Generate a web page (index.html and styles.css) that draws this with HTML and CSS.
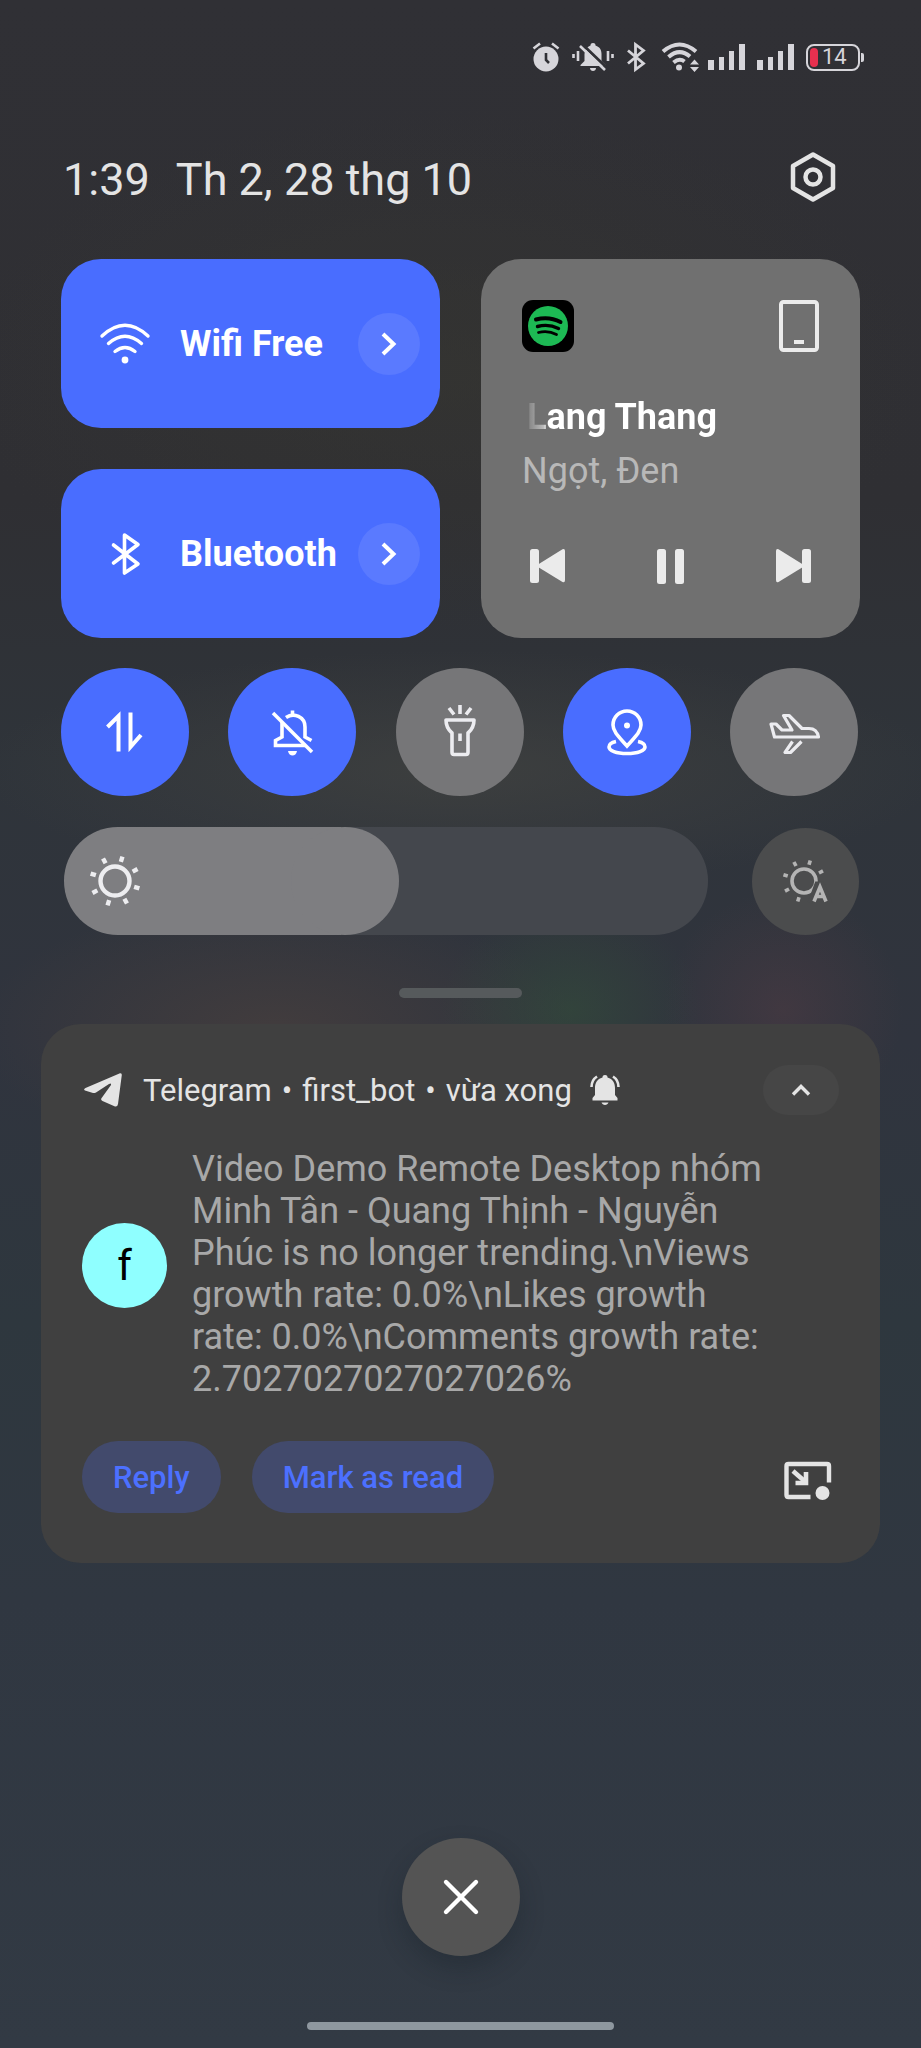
FILE: index.html
```html
<!DOCTYPE html>
<html lang="vi">
<head>
<meta charset="utf-8">
<meta name="viewport" content="width=device-width, initial-scale=1">
<title>Quick settings</title>
<link rel="stylesheet" href="styles.css">
</head>
<body>
<div class="shade">
  <div class="status">
    <svg class="s-alarm" width="28" height="30" viewBox="0 0 28 30"><circle cx="14" cy="17" r="12.500" fill="currentColor"/><path d="M1.500 6.500L8 1.500M26.500 6.500L20 1.500" stroke="currentColor" stroke-width="2.600"/><path d="M14 11v7l3 3" fill="none" stroke="#303035" stroke-width="2.600"/></svg>
    <svg class="s-mute" width="42" height="30" viewBox="0 0 42 30"><path d="M1.500 12v4M6 9v10M40.500 12v4M36 9v10" stroke="currentColor" stroke-width="2.600"/><path d="M21 1c2 0 2.500 1 2.500 2.500C28 5 29.500 8 29.500 12v7l4 4v1h-25v-1l4-4v-7c0-4 2-7 6-8.500C18.500 2 19 1 21 1z" fill="currentColor"/><path d="M18 26h6c0 4-6 4-6 0z" fill="currentColor"/><path d="M10 2L36 27" stroke="#303035" stroke-width="3"/><path d="M8 4L33 28" stroke="currentColor" stroke-width="2.600"/></svg>
    <svg class="s-bt" width="20" height="30" viewBox="0 0 20 30"><path d="M2 8.500L17.500 21.500 9.500 27.500V2.500L17.500 8.500 2 21.500" fill="none" stroke="currentColor" stroke-width="2.800"/></svg>
    <svg class="s-wifi" width="40" height="30" viewBox="0 0 40 30"><g fill="none" stroke="currentColor" stroke-width="4"><path d="M2 9.500Q18.500-4.500 35 9.500"/><path d="M7.500 15Q18.500 5.500 29 14.500"/><path d="M12.500 20.500Q18.500 15.500 23.500 19.500"/></g><circle cx="18" cy="25.500" r="3" fill="currentColor"/><path d="M29 22.500l4.500-5 4.500 5zM29 25l4.500 5 4.500-5z" fill="currentColor"/></svg>
    <svg class="s-sig" width="38" height="26" viewBox="0 0 38 26"><path d="M0 16h6v10H0zM11 13h5v13h-5zM21 7h5v19h-5zM31 0h6v26h-6z" fill="currentColor"/></svg>
    <svg class="s-sig" width="38" height="26" viewBox="0 0 38 26"><path d="M0 16h6v10H0zM11 13h5v13h-5zM21 7h5v19h-5zM31 0h6v26h-6z" fill="currentColor"/></svg>
    <span class="battery"><span class="battery-level"></span>14</span>
  </div>

  <header class="top">
    <span class="clock">1:39</span>
    <span class="date">Th 2, 28 thg 10</span>
    <button class="plain settings" aria-label="Settings"><svg width="46" height="50" viewBox="0 0 46 50" fill="none" stroke="currentColor" stroke-width="4.500" stroke-linejoin="round"><path d="M23 2.500L43 14v22L23 47.500 3 36V14z"/><circle cx="23" cy="25" r="7.500"/></svg></button>
  </header>

  <section class="tiles">
    <div class="tile wifi">
      <button class="plain tile-main"><svg width="50" height="42" viewBox="0 0 50 42" fill="none" stroke="currentColor" stroke-width="3.400" stroke-linecap="round"><path d="M2 13Q25-8.500 48 13"/><path d="M8.500 20.500Q25 6 41.500 20.500"/><path d="M15 28.500Q25 20.500 35 28.500"/><circle cx="25" cy="37" r="3.400" fill="currentColor" stroke="none"/></svg><span>Wifi Free</span></button>
      <button class="plain more" aria-label="Wifi details"><svg width="16" height="24" viewBox="0 0 16 24" fill="none" stroke="currentColor" stroke-width="4"><path d="M2 2L12.500 12 2 22"/></svg></button>
    </div>
    <div class="tile bt">
      <button class="plain tile-main"><svg width="50" height="42" viewBox="0 0 50 42" fill="none" stroke="currentColor" stroke-width="3.600" stroke-linecap="round" stroke-linejoin="round"><path d="M13.500 12L38 31 24.500 40V2L38 11.500 13.500 30"/></svg><span>Bluetooth</span></button>
      <button class="plain more" aria-label="Bluetooth details"><svg width="16" height="24" viewBox="0 0 16 24" fill="none" stroke="currentColor" stroke-width="4"><path d="M2 2L12.500 12 2 22"/></svg></button>
    </div>
    <div class="media">
      <div class="media-top">
        <svg width="52" height="52" viewBox="0 0 52 52"><rect width="52" height="52" rx="11" fill="#000"/><circle cx="26" cy="26" r="20" fill="#1db954"/><g fill="none" stroke="#000" stroke-linecap="round"><path d="M14 19.500Q27 16 38.500 22" stroke-width="4"/><path d="M15.500 26.500Q26.500 23.500 36.500 28.500" stroke-width="3.400"/><path d="M16.500 32.500Q26 30 34.500 34.500" stroke-width="2.800"/></g></svg>
        <button class="plain" aria-label="Output device"><svg width="40" height="52" viewBox="0 0 40 52" fill="none" stroke="currentColor"><rect x="2" y="2" width="36" height="48" rx="2.500" stroke-width="4"/><path d="M15 42h10" stroke-width="4"/></svg></button>
      </div>
      <div class="song">Lang Thang</div>
      <div class="artist">Ngọt, Đen</div>
      <div class="controls">
        <button class="plain" aria-label="Previous"><svg width="36" height="36" viewBox="0 0 36 36" fill="currentColor"><rect y="1" width="9" height="34" rx="2.500"/><path d="M8 16.500L32.500 1.300Q35 0.500 35 3V32Q35 35 32.500 34L8 19Q6.500 17.800 8 16.500z"/></svg></button>
        <button class="plain" aria-label="Pause"><svg width="36" height="36" viewBox="0 0 36 36" fill="currentColor"><rect x="4" y="1" width="9" height="35" rx="2.500"/><rect x="22" y="1" width="9" height="35" rx="2.500"/></svg></button>
        <button class="plain" aria-label="Next"><svg width="36" height="36" viewBox="0 0 36 36" fill="currentColor"><rect x="27" y="1" width="9" height="34" rx="2.500"/><path d="M28 16.500L3.500 1.300Q1 0.500 1 3V32Q1 35 3.500 34L28 19Q29.500 17.800 28 16.500z"/></svg></button>
      </div>
    </div>
  </section>

  <section class="toggles">
    <button class="plain toggle on" aria-label="Mobile data"><svg width="52" height="52" viewBox="0 0 52 52" fill="none" stroke="currentColor" stroke-width="4"><path d="M8.500 21L19.500 10V45.500M31.500 6.500V41L42 29"/></svg></button>
    <button class="plain toggle on" aria-label="Silent"><svg width="52" height="52" viewBox="0 0 52 52" fill="none" stroke="currentColor" stroke-width="3.600"><path d="M20 11.500C28 6 39 11 39 21V31L45.500 34.500M16 16V31L9.500 34.500V39.500H40M26.500 4.500V9"/><path d="M7 7L46 46"/><path d="M22 45h9c-1 6-8 6-9 0z" fill="currentColor" stroke="none"/></svg></button>
    <button class="plain toggle" aria-label="Flashlight"><svg width="52" height="52" viewBox="0 0 52 52" fill="none" stroke="currentColor" stroke-width="3.600" stroke-linejoin="round"><path d="M12 14H40Q40 22 34 27V46Q34 48.500 32 48.500H20Q18 48.500 18 46V27Q12 22 12 14zM26 27.500V35M26-1V8M15 2L20 8.500M37 2L32 8.500"/></svg></button>
    <button class="plain toggle on" aria-label="Location"><svg width="52" height="52" viewBox="0 0 52 52" fill="none" stroke="currentColor" stroke-width="3.600"><path d="M26 40C19 32 12 26 12 19a14 14 0 0 1 28 0C40 26 33 32 26 40z"/><circle cx="26" cy="19.500" r="3" fill="currentColor" stroke="none"/><path d="M15 35.500C10 36.500 8 38.500 8 41c0 3.500 7 6.500 18 6.500S44 44.500 44 41c0-2.500-2-4.500-7-5.500"/></svg></button>
    <button class="plain toggle" aria-label="Airplane mode"><svg width="52" height="52" viewBox="0 0 52 52" fill="none" stroke="currentColor" stroke-width="3.200" stroke-linejoin="round"><path d="M3 18L6.500 31H50.500Q49 22.500 41 22.500H34L21 9.500H15.500L24 24H14L8 18zM24.500 35.500L17 46.500H22.500L33.500 35.500"/></svg></button>
  </section>

  <section class="brightness">
    <div class="slider">
      <input type="range" min="0" max="255" value="108" aria-label="Brightness">
      <svg width="52" height="52" viewBox="-26 -26 52 52" fill="none" stroke="currentColor" stroke-width="4.400"><circle r="14.500"/><g transform="rotate(17)"><path d="M0-25.500V-20M0 25.500V20M25.500 0H20M-25.500 0H-20"/><path transform="rotate(45)" d="M0-25.500V-20M0 25.500V20M25.500 0H20M-25.500 0H-20"/></g></svg>
    </div>
    <button class="plain auto" aria-label="Automatic brightness"><svg width="48" height="48" viewBox="-22 -24 48 48" fill="none" stroke="currentColor" stroke-width="3.600"><circle r="12"/><path transform="rotate(17)" d="M0-21.500V-17M0 21.500V17M21.500 0H17M-21.500 0H-17M15.200-15.200L12-12M-15.200-15.200L-12-12M-15.200 15.200L-12 12"/><path d="M6 22L13 3H18L26 22" fill="#4b4c4d" stroke="#4b4c4d" stroke-width="5"/><path d="M10 20.500L16 6L22 20.500M12 15.500H20"/></svg></button>
  </section>

  <div class="handle"></div>

  <article class="card">
    <div class="card-head">
      <svg width="38" height="34" viewBox="0 0 38 34" fill="currentColor"><path d="M36 .3Q38 0 37.800 2L34 31Q33.500 34 31 33.500L18.500 28Q16 26.500 18 24.500L27 12Q27.500 9.500 25 11L12 19.500Q10.500 20.300 9 20L1 17.500Q-1 16.300 1.500 15z"/></svg>
      <div class="app"><span>Telegram</span><span>•</span><span>first_bot</span><span>•</span><span>vừa xong</span></div>
      <svg class="ring" width="30" height="30" viewBox="0 0 30 30"><path d="M15 0c2 0 2.500 1 2.500 2.500C23 4 25 8 25 13v7l2.500 3v2.500h-25V23L5 20v-7C5 8 7 4 12.500 2.500 12.500 1 13 0 15 0zM11.500 27.500h7c-1 3.300-6 3.300-7 0z" fill="currentColor"/><path d="M1.500 12Q1.500 5 7 1.500M28.500 12Q28.500 5 23 1.500" fill="none" stroke="currentColor" stroke-width="2.600"/></svg>
      <button class="plain collapse" aria-label="Collapse"><svg width="20" height="14" viewBox="0 0 20 14" fill="none" stroke="currentColor" stroke-width="3.400"><path d="M2 11.500L10 3.500 18 11.500"/></svg></button>
    </div>
    <div class="message">
      <span class="avatar">f</span>
      <p>Video Demo Remote Desktop nhóm Minh Tân - Quang Thịnh - Nguyễn Phúc is no longer trending.\nViews growth rate: 0.0%\nLikes growth rate: 0.0%\nComments growth rate: 2.7027027027027026%</p>
    </div>
    <div class="actions">
      <button class="plain action">Reply</button>
      <button class="plain action">Mark as read</button>
      <button class="plain pip" aria-label="Floating window"><svg width="48" height="40" viewBox="0 0 48 40" fill="none" stroke="currentColor" stroke-width="4"><path d="M26.500 36H4.500Q2.500 36 2.500 34V5Q2.500 3 4.500 3H43Q45 3 45 5V21.500" stroke-width="4.400"/><path d="M9 10L21 20.500" stroke-width="4.600"/><path d="M11.500 22H22V11" stroke-width="4.600"/><circle cx="38.500" cy="32" r="7" fill="currentColor" stroke="none"/></svg></button>
    </div>
  </article>

  <button class="plain close" aria-label="Clear all"><svg width="36" height="36" viewBox="0 0 36 36" fill="none" stroke="currentColor" stroke-width="4.400" stroke-linecap="round"><path d="M3 3L33 33M33 3L3 33"/></svg></button>
  <div class="home"></div>
</div>
</body>
</html>
```

FILE: styles.css
```css
* { box-sizing: border-box; }
body {
  margin: 0;
  font-family: Roboto, "Noto Sans", sans-serif;
  color: #e4e4e4;
  background: #303035;
}
svg { display: block; flex: none; overflow: visible; }
.plain {
  margin: 0;
  padding: 0;
  border: 0;
  background: none;
  color: inherit;
  font: inherit;
}
.shade {
  min-height: 100vh;
  display: flex;
  flex-direction: column;
  padding: 42px 61px 18px;
  background:
    radial-gradient(ellipse 130px 110px at 62% 1010px, rgba(52, 82, 58, .5), transparent),
    radial-gradient(ellipse 120px 120px at 85% 1010px, rgba(90, 62, 70, .4), transparent),
    radial-gradient(ellipse 300px 130px at 30% 1030px, rgba(78, 66, 62, .6), transparent),
    radial-gradient(ellipse 480px 120px at 50% 770px, rgba(70, 70, 66, .6), transparent),
    radial-gradient(ellipse 480px 260px at 48% 370px, rgba(54, 54, 48, .6), transparent),
    linear-gradient(#303035 0, #2f2f33 500px, #2f343a 760px, #30343e 1040px, #2e373e 1320px, #303741 1600px, #323a44 2048px);
}
.status {
  display: flex;
  align-items: center;
  justify-content: flex-end;
  height: 30px;
  margin-right: -5px;
  color: #d6d5da;
}
.s-alarm { margin-right: 12px; }
.s-mute { margin-right: 12px; }
.s-bt { margin-right: 15px; }
.s-wifi { margin-right: 7px; }
.s-sig { margin-right: 11px; }
.battery {
  position: relative;
  display: flex;
  align-items: center;
  gap: 4px;
  width: 54px;
  height: 27px;
  margin-right: 5px;
  padding-left: 2px;
  border: 2px solid currentColor;
  border-radius: 8px;
  font-size: 22px;
  line-height: 1;
}
.battery::after {
  content: "";
  position: absolute;
  right: -6px;
  top: 7px;
  width: 3px;
  height: 9px;
  border-radius: 0 2px 2px 0;
  background: currentColor;
}
.battery-level {
  width: 8px;
  height: 19px;
  border-radius: 4px;
  background: #e8304f;
}
.top {
  display: flex;
  align-items: center;
  height: 60px;
  margin-top: 75px;
  padding: 0 24px 0 2px;
  font-size: 45px;
}
.clock, .date { padding-top: 4px; }
.clock { margin-right: 26px; }
.settings { margin-left: auto; }
.tiles {
  display: grid;
  grid-template-columns: 1fr 1fr;
  grid-template-rows: 169px 169px;
  gap: 41px;
  margin-top: 52px;
}
.tile {
  display: flex;
  align-items: center;
  padding: 0 20px 0 39px;
  border-radius: 40px;
  background: #496dff;
  color: #fff;
}
.tile-main {
  flex: 1;
  display: flex;
  align-items: center;
  gap: 30px;
  font-size: 36px;
  font-weight: 700;
  white-space: nowrap;
}
.more {
  flex: none;
  display: grid;
  place-items: center;
  width: 62px;
  height: 62px;
  border-radius: 50%;
  background: #5a7aff;
}
.media {
  grid-column: 2;
  grid-row: 1 / 3;
  display: flex;
  flex-direction: column;
  padding: 41px;
  border-radius: 40px;
  background: #707070;
  color: #ebebeb;
}
.media-top { display: flex; justify-content: space-between; }
.song {
  margin-top: 41px;
  padding-left: 5px;
  font-size: 36px;
  line-height: 48px;
  font-weight: 700;
  background: linear-gradient(90deg, #808080 5px, #bdbdbd 22px, #fff 24px);
  -webkit-background-clip: text;
  background-clip: text;
  color: transparent;
}
.artist {
  margin-top: 6px;
  font-size: 36px;
  line-height: 48px;
  color: #b8b8b8;
}
.controls {
  display: flex;
  justify-content: space-between;
  margin-top: 53px;
  padding: 0 8px;
}
.toggles {
  display: flex;
  justify-content: space-between;
  margin: 30px 2px 0 0;
}
.toggle {
  display: grid;
  place-items: center;
  width: 128px;
  height: 128px;
  border-radius: 50%;
  background: #767678;
  color: #ececf0;
}
.toggle.on { background: #496dff; color: #fff; }
.brightness {
  display: flex;
  align-items: center;
  gap: 44px;
  margin-top: 31px;
  padding: 0 1px 0 3px;
}
.slider {
  flex: 1;
  display: grid;
  align-items: center;
  color: #ededf0;
}
.slider input, .slider svg { grid-area: 1 / 1; }
.slider svg { margin-left: 25px; pointer-events: none; }
.slider input {
  -webkit-appearance: none;
  appearance: none;
  width: 100%;
  height: 108px;
  margin: 0;
  border-radius: 54px;
  background: linear-gradient(90deg, #7e7e81 43%, #44474d 43%);
}
.slider input::-webkit-slider-thumb {
  -webkit-appearance: none;
  width: 108px;
  height: 108px;
  border-radius: 50%;
  background: #7e7e81;
}
.auto {
  display: grid;
  place-items: center;
  width: 107px;
  height: 107px;
  border-radius: 50%;
  background: #4b4c4d;
  color: #b4b4b4;
}
.handle {
  align-self: center;
  width: 123px;
  height: 10px;
  margin-top: 53px;
  border-radius: 5px;
  background: #565a5c;
}
.card {
  margin: 26px -20px 0;
  padding: 41px 41px 50px;
  border-radius: 40px;
  background: #404040;
}
.card-head {
  display: flex;
  align-items: center;
  height: 50px;
  padding-left: 2px;
  font-size: 31px;
}
.app {
  display: flex;
  gap: 10px;
  margin: 0 18px 0 21px;
}
.collapse {
  display: grid;
  place-items: center;
  width: 76px;
  height: 50px;
  margin-left: auto;
  border-radius: 25px;
  background: #464646;
}
.message {
  display: flex;
  gap: 25px;
  margin-top: 33px;
  padding-right: 68px;
}
.avatar {
  flex: none;
  display: grid;
  place-items: center;
  width: 85px;
  height: 85px;
  margin-top: 75px;
  border-radius: 50%;
  background: #8fffff;
  color: #000;
  font-size: 42px;
}
.message p {
  flex: 1;
  margin: 0;
  font-size: 36px;
  line-height: 42px;
  color: #a8a8a8;
}
.actions {
  display: flex;
  align-items: center;
  gap: 31px;
  margin-top: 41px;
}
.action {
  height: 72px;
  padding: 0 31px;
  border-radius: 36px;
  background: #424a6c;
  color: #4c70ff;
  font-size: 31px;
  font-weight: 500;
}
.pip { margin: 8px 7px 0 auto; }
.close {
  align-self: center;
  display: grid;
  place-items: center;
  width: 118px;
  height: 118px;
  margin-top: auto;
  border-radius: 50%;
  background: #545454;
  color: #fff;
  box-shadow: 0 12px 24px rgba(20, 30, 38, .3);
}
.home {
  align-self: center;
  width: 307px;
  height: 8px;
  margin-top: 66px;
  border-radius: 4px;
  background: #8e979f;
}
```
